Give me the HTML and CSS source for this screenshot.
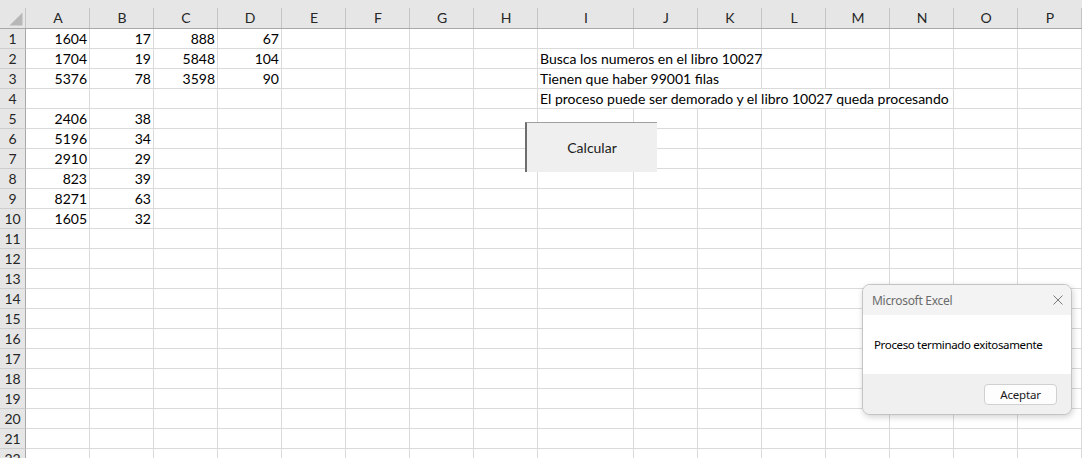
FILE: index.html
```html
<!DOCTYPE html>
<html lang="es">
<head>
<meta charset="utf-8">
<title>Excel</title>
<link rel="stylesheet" href="styles.css">
</head>
<body>
<div class="sheet">
  <div class="grid">
    <div class="corner"><svg width="26" height="28" viewBox="0 0 26 28"><polygon points="22.5,12.5 22.5,25.5 9.5,25.5" fill="#b7b7b7"/></svg></div>
    <div class="ch">A</div><div class="ch">B</div><div class="ch">C</div><div class="ch">D</div><div class="ch">E</div><div class="ch">F</div><div class="ch">G</div><div class="ch">H</div><div class="ch">I</div><div class="ch">J</div><div class="ch">K</div><div class="ch">L</div><div class="ch">M</div><div class="ch">N</div><div class="ch">O</div><div class="ch">P</div>

    <div class="rh">1</div><div class="c">1604</div><div class="c">17</div><div class="c">888</div><div class="c">67</div><div class="c"></div><div class="c"></div><div class="c"></div><div class="c"></div><div class="c"></div><div class="c"></div><div class="c"></div><div class="c"></div><div class="c"></div><div class="c"></div><div class="c"></div><div class="c"></div>

    <div class="rh">2</div><div class="c">1704</div><div class="c">19</div><div class="c">5848</div><div class="c">104</div><div class="c"></div><div class="c"></div><div class="c"></div><div class="c"></div><div class="c t s3">Busca los numeros en el libro 10027</div><div class="c"></div><div class="c"></div><div class="c"></div><div class="c"></div><div class="c"></div>

    <div class="rh">3</div><div class="c">5376</div><div class="c">78</div><div class="c">3598</div><div class="c">90</div><div class="c"></div><div class="c"></div><div class="c"></div><div class="c"></div><div class="c t s3">Tienen que haber 99001 filas</div><div class="c"></div><div class="c"></div><div class="c"></div><div class="c"></div><div class="c"></div>

    <div class="rh">4</div><div class="c"></div><div class="c"></div><div class="c"></div><div class="c"></div><div class="c"></div><div class="c"></div><div class="c"></div><div class="c"></div><div class="c t s6">El proceso puede ser demorado y el libro 10027 queda procesando</div><div class="c"></div><div class="c"></div>

    <div class="rh">5</div><div class="c">2406</div><div class="c">38</div><div class="c"></div><div class="c"></div><div class="c"></div><div class="c"></div><div class="c"></div><div class="c"></div><div class="c"></div><div class="c"></div><div class="c"></div><div class="c"></div><div class="c"></div><div class="c"></div><div class="c"></div><div class="c"></div>

    <div class="rh">6</div><div class="c">5196</div><div class="c">34</div><div class="c"></div><div class="c"></div><div class="c"></div><div class="c"></div><div class="c"></div><div class="c"></div><div class="c"></div><div class="c"></div><div class="c"></div><div class="c"></div><div class="c"></div><div class="c"></div><div class="c"></div><div class="c"></div>

    <div class="rh">7</div><div class="c">2910</div><div class="c">29</div><div class="c"></div><div class="c"></div><div class="c"></div><div class="c"></div><div class="c"></div><div class="c"></div><div class="c"></div><div class="c"></div><div class="c"></div><div class="c"></div><div class="c"></div><div class="c"></div><div class="c"></div><div class="c"></div>

    <div class="rh">8</div><div class="c">823</div><div class="c">39</div><div class="c"></div><div class="c"></div><div class="c"></div><div class="c"></div><div class="c"></div><div class="c"></div><div class="c"></div><div class="c"></div><div class="c"></div><div class="c"></div><div class="c"></div><div class="c"></div><div class="c"></div><div class="c"></div>

    <div class="rh">9</div><div class="c">8271</div><div class="c">63</div><div class="c"></div><div class="c"></div><div class="c"></div><div class="c"></div><div class="c"></div><div class="c"></div><div class="c"></div><div class="c"></div><div class="c"></div><div class="c"></div><div class="c"></div><div class="c"></div><div class="c"></div><div class="c"></div>

    <div class="rh">10</div><div class="c">1605</div><div class="c">32</div><div class="c"></div><div class="c"></div><div class="c"></div><div class="c"></div><div class="c"></div><div class="c"></div><div class="c"></div><div class="c"></div><div class="c"></div><div class="c"></div><div class="c"></div><div class="c"></div><div class="c"></div><div class="c"></div>

    <div class="rh">11</div><div class="c"></div><div class="c"></div><div class="c"></div><div class="c"></div><div class="c"></div><div class="c"></div><div class="c"></div><div class="c"></div><div class="c"></div><div class="c"></div><div class="c"></div><div class="c"></div><div class="c"></div><div class="c"></div><div class="c"></div><div class="c"></div>

    <div class="rh">12</div><div class="c"></div><div class="c"></div><div class="c"></div><div class="c"></div><div class="c"></div><div class="c"></div><div class="c"></div><div class="c"></div><div class="c"></div><div class="c"></div><div class="c"></div><div class="c"></div><div class="c"></div><div class="c"></div><div class="c"></div><div class="c"></div>

    <div class="rh">13</div><div class="c"></div><div class="c"></div><div class="c"></div><div class="c"></div><div class="c"></div><div class="c"></div><div class="c"></div><div class="c"></div><div class="c"></div><div class="c"></div><div class="c"></div><div class="c"></div><div class="c"></div><div class="c"></div><div class="c"></div><div class="c"></div>

    <div class="rh">14</div><div class="c"></div><div class="c"></div><div class="c"></div><div class="c"></div><div class="c"></div><div class="c"></div><div class="c"></div><div class="c"></div><div class="c"></div><div class="c"></div><div class="c"></div><div class="c"></div><div class="c"></div><div class="c"></div><div class="c"></div><div class="c"></div>

    <div class="rh">15</div><div class="c"></div><div class="c"></div><div class="c"></div><div class="c"></div><div class="c"></div><div class="c"></div><div class="c"></div><div class="c"></div><div class="c"></div><div class="c"></div><div class="c"></div><div class="c"></div><div class="c"></div><div class="c"></div><div class="c"></div><div class="c"></div>

    <div class="rh">16</div><div class="c"></div><div class="c"></div><div class="c"></div><div class="c"></div><div class="c"></div><div class="c"></div><div class="c"></div><div class="c"></div><div class="c"></div><div class="c"></div><div class="c"></div><div class="c"></div><div class="c"></div><div class="c"></div><div class="c"></div><div class="c"></div>

    <div class="rh">17</div><div class="c"></div><div class="c"></div><div class="c"></div><div class="c"></div><div class="c"></div><div class="c"></div><div class="c"></div><div class="c"></div><div class="c"></div><div class="c"></div><div class="c"></div><div class="c"></div><div class="c"></div><div class="c"></div><div class="c"></div><div class="c"></div>

    <div class="rh">18</div><div class="c"></div><div class="c"></div><div class="c"></div><div class="c"></div><div class="c"></div><div class="c"></div><div class="c"></div><div class="c"></div><div class="c"></div><div class="c"></div><div class="c"></div><div class="c"></div><div class="c"></div><div class="c"></div><div class="c"></div><div class="c"></div>

    <div class="rh">19</div><div class="c"></div><div class="c"></div><div class="c"></div><div class="c"></div><div class="c"></div><div class="c"></div><div class="c"></div><div class="c"></div><div class="c"></div><div class="c"></div><div class="c"></div><div class="c"></div><div class="c"></div><div class="c"></div><div class="c"></div><div class="c"></div>

    <div class="rh">20</div><div class="c"></div><div class="c"></div><div class="c"></div><div class="c"></div><div class="c"></div><div class="c"></div><div class="c"></div><div class="c"></div><div class="c"></div><div class="c"></div><div class="c"></div><div class="c"></div><div class="c"></div><div class="c"></div><div class="c"></div><div class="c"></div>

    <div class="rh">21</div><div class="c"></div><div class="c"></div><div class="c"></div><div class="c"></div><div class="c"></div><div class="c"></div><div class="c"></div><div class="c"></div><div class="c"></div><div class="c"></div><div class="c"></div><div class="c"></div><div class="c"></div><div class="c"></div><div class="c"></div><div class="c"></div>

    <div class="rh">22</div><div class="c"></div><div class="c"></div><div class="c"></div><div class="c"></div><div class="c"></div><div class="c"></div><div class="c"></div><div class="c"></div><div class="c"></div><div class="c"></div><div class="c"></div><div class="c"></div><div class="c"></div><div class="c"></div><div class="c"></div><div class="c"></div>
  </div>

  <button class="form-btn" type="button">Calcular</button>

  <div class="dialog">
    <div class="dlg-title">
      <span>Microsoft Excel</span>
      <svg class="dlg-close" width="10" height="10" viewBox="0 0 10 10"><path d="M0.5 0.5 L9.5 9.5 M9.5 0.5 L0.5 9.5" stroke="#7a7a7a" stroke-width="1" fill="none"/></svg>
    </div>
    <div class="dlg-body">Proceso terminado exitosamente</div>
    <div class="dlg-foot"><button class="dlg-btn" type="button">Aceptar</button></div>
  </div>
</div>
</body>
</html>
```

FILE: styles.css
```css
html, body {
  margin: 0;
  padding: 0;
  background: #ffffff;
}

body {
  width: 1082px;
  height: 458px;
  overflow: hidden;
  font-family: Lato, "Liberation Sans", sans-serif;
}

.sheet {
  position: relative;
  width: 1082px;
  height: 458px;
  overflow: hidden;
}

.grid {
  display: grid;
  grid-template-columns: 26px repeat(8, 64px) 96px repeat(7, 64px);
  grid-template-rows: 29px;
  grid-auto-rows: 20px;
}

.corner {
  box-sizing: border-box;
  background: linear-gradient(#c4c4c4, #c4c4c4) right bottom / 1px 20px no-repeat, #e6e6e6;
  border-bottom: 1px solid #a8a8a8;
}

.corner svg {
  display: block;
}

.ch {
  box-sizing: border-box;
  background: linear-gradient(#c4c4c4, #c4c4c4) right bottom / 1px 20px no-repeat, #e6e6e6;
  border-bottom: 1px solid #a8a8a8;
  padding-top: 8px;
  font-size: 14px;
  line-height: 19px;
  text-align: center;
  color: #262626;
}

.rh {
  box-sizing: border-box;
  background: #e6e6e6;
  border-right: 1px solid #a8a8a8;
  border-bottom: 1px solid #cdcdcd;
  font-size: 14px;
  line-height: 19px;
  text-align: center;
  color: #262626;
}

.c {
  box-sizing: border-box;
  border-right: 1px solid #dadada;
  border-bottom: 1px solid #dadada;
  padding: 0 2px;
  font-size: 14px;
  line-height: 19px;
  text-align: right;
  white-space: nowrap;
  color: #000000;
}

.t {
  text-align: left;
}

.s3 {
  grid-column: span 3;
}

.s6 {
  grid-column: span 6;
}

.form-btn {
  position: absolute;
  left: 525px;
  top: 122px;
  width: 132px;
  height: 50px;
  box-sizing: border-box;
  margin: 0;
  padding: 0 0 1px 0;
  background: #efefef;
  border: none;
  border-top: 1px solid #a0a0a0;
  border-left: 2px solid #6e6e6e;
  font-family: Lato, "Liberation Sans", sans-serif;
  font-size: 14px;
  color: #1a1a1a;
}

.dialog {
  position: absolute;
  left: 862px;
  top: 284px;
  width: 210px;
  height: 131px;
  box-sizing: border-box;
  border: 1px solid #c4c4c4;
  border-radius: 8px;
  overflow: hidden;
  background: #f0f0f0;
  box-shadow: 1px 2px 6px rgba(0, 0, 0, 0.18);
  display: flex;
  flex-direction: column;
  font-family: "Noto Sans", sans-serif;
  font-size: 11.5px;
}

.dlg-title {
  height: 30px;
  flex: none;
  display: flex;
  align-items: center;
  justify-content: space-between;
  padding: 0 8px 0 9px;
  background: #f3f3f3;
  color: #6b6b6b;
  font-size: 12px;
  letter-spacing: -0.3px;
}

.dlg-close {
  display: block;
}

.dlg-body {
  height: 59px;
  flex: none;
  box-sizing: border-box;
  display: flex;
  align-items: center;
  padding-left: 11px;
  background: #ffffff;
  color: #000000;
  letter-spacing: -0.35px;
}

.dlg-foot {
  flex: 1;
  display: flex;
  justify-content: flex-end;
  align-items: flex-start;
  padding: 10px 14px 0 0;
  background: #f0f0f0;
}

.dlg-btn {
  width: 73px;
  height: 21px;
  box-sizing: border-box;
  margin: 0;
  padding: 0;
  background: #fdfdfd;
  border: 1px solid #d0d0d0;
  border-radius: 4px;
  font-family: "Noto Sans", sans-serif;
  font-size: 11.5px;
  letter-spacing: -0.2px;
  color: #1a1a1a;
}
```
